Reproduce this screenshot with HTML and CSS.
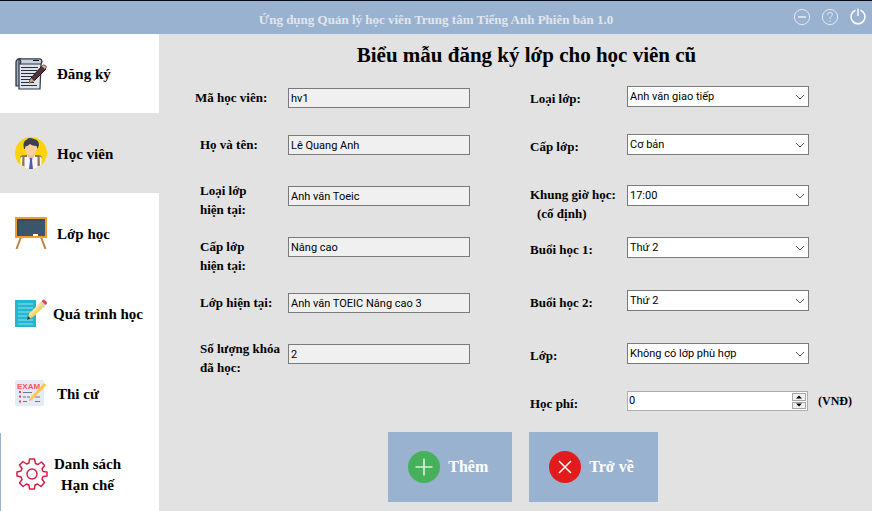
FILE: index.html
```html
<!DOCTYPE html>
<html lang="vi">
<head>
<meta charset="utf-8">
<title>Ứng dụng Quản lý học viên</title>
<link rel="stylesheet" href="styles.css">
</head>
<body>
<header class="topbar">
  <p class="app-name">Ứng dụng Quản lý học viên Trung tâm Tiếng Anh Phiên bản 1.0</p>
  <div class="window-tools">
    <button type="button" aria-label="Thu nhỏ"><svg viewBox="0 0 18 18"><circle cx="9" cy="9" r="7.6" opacity=".7"/><path d="M5 9h8" stroke-width="2" opacity=".6"/></svg></button>
    <button type="button" aria-label="Trợ giúp"><svg viewBox="0 0 18 18"><circle cx="9" cy="9" r="7.6" opacity=".7"/><path d="M6.6 7V6.300Q6.800 4.500 9 4.500Q11.400 4.500 11.400 6.500Q11.400 7.600 10 8.500Q9 9.200 9 11M9 12.500V14" opacity=".7"/></svg></button>
    <button type="button" aria-label="Thoát"><svg viewBox="0 0 18 18"><path d="M6.500 2.200A7 7 0 1 0 11.500 2.200" stroke-width="1.500"/><path d="M9 0.500V8" stroke-width="2" opacity=".7"/></svg></button>
  </div>
</header>
<div class="shell">
  <nav class="sidebar">
    <a class="nav-item" href="#dang-ky">
      <svg class="icon" viewBox="0 0 32 32">
        <path d="M5 1Q1 1 1 4V28H5Z" fill="#9cafc2" stroke="#222832" stroke-width="1.200"/>
        <path d="M4 1H25Q28 2 26 6L25 31H4Z" fill="#dce3ed" stroke="#303640" stroke-width="1.200"/>
        <path d="M4 1H25Q28 2 26 6H5Q7 3 4 1Z" fill="#c4d0dc" stroke="#303640" stroke-width="1.200"/>
        <path d="M18 2.500h6" stroke="#111"/>
        <path d="M6 9.500h17M6 12.500h16M6 15.500h15M6 18.500h11M6 21.500h10M6 24.500h13M6 27.500h16" stroke="#292e38" stroke-width="1.100"/>
        <path d="M14 25L16 20L27 8L31 11L20 22Z" fill="#513238" stroke="#20161a"/>
        <path d="M14 25L16 20L19 23Z" fill="#d7a46d"/><path d="M26.500 8.500L28.500 7Q31 7 31.500 9L30 11.500Z" fill="#e5b486" stroke="#292024" stroke-width=".7"/>
      </svg>
      <span>Đăng ký</span>
    </a>
    <a class="nav-item is-active" href="#hoc-vien">
      <svg class="icon" viewBox="0 0 32 32">
        <circle cx="16" cy="16" r="16" fill="#fdd303"/>
        <path d="M5.500 28V21Q6 19 11 18.500H21Q26 19 26.500 21V28Q16 36 5.500 28Z" fill="#f7f7fb"/>
        <path d="M13 15H19V20L16 22L13 20Z" fill="#efbd89"/>
        <path d="M10 8Q16 3 22 8V12Q21 18 16 19Q11 18 10 12Z" fill="#fccfa0"/>
        <path d="M9 12Q7 4 12 2.500Q14 0 19 2Q24 3 24 8L22.500 12L21.500 9Q17 9 15 7Q13 9 10.500 9.500L9.800 12Z" fill="#394252"/>
        <path d="M7.500 18.500L9.500 18V29.500L7 28.500ZM24.500 18.500L22.500 18V29.500L25 28.500Z" fill="#93705e"/>
        <path d="M5 20Q6 17.500 12 18V20H9.500Q6 19 5 21ZM27 20Q26 17.500 20 18V20H22.500Q26 19 27 21Z" fill="#93705e"/>
        <path d="M14.500 21H17.500L17 23.500L18 32H14L15 23.500Z" fill="#4e5daa"/>
      </svg>
      <span>Học viên</span>
    </a>
    <a class="nav-item" href="#lop-hoc">
      <svg class="icon" viewBox="0 0 32 32">
        <path d="M6 20L1.500 32M26 20L30.500 32" stroke="#bd8140" stroke-width="2"/>
        <path d="M1 1H31V20H1Z" fill="#3b566b" stroke="#f29c29" stroke-width="2"/>
        <path d="M3 19V3H29" fill="none" stroke="#2d4358"/><path d="M18 18h5" stroke="#fff" stroke-width="2"/>
      </svg>
      <span>Lớp học</span>
    </a>
    <a class="nav-item nav-item--long" href="#qua-trinh">
      <svg class="icon" viewBox="0 0 32 32">
        <path d="M0 3H21V30H0Z" fill="#22b8d1"/>
        <path d="M3 7h15M3 11h15M3 15h14M3 19h9M3 23h15M3 27h15" stroke="#8fe0ea"/>
        <path d="M12 23L14 17L26 5L30 9L18 20Z" fill="#f8d568"/><path d="M14 17L26 5L27.500 6.500L16 18Z" fill="#ffe69c"/>
        <path d="M12 23L13 19L15.500 21.500Z" fill="#26333c"/><path d="M25 6L27.500 3.500L31 7L29 9.500Z" fill="#cbd5dc"/><path d="M26.500 4L28.500 2.500Q32 4 32 6.500L30.500 8Z" fill="#dc4557"/>
      </svg>
      <span>Quá trình học</span>
    </a>
    <a class="nav-item" href="#thi-cu">
      <svg class="icon" viewBox="0 0 32 32">
        <rect y="3" width="29" height="26" rx="2" fill="#e5eaf7"/>
        <text class="exam" x="2" y="12">EXAM</text>
        <path d="M4 15h2M4 19.500h2M4 24.500h2" stroke="#ef4059" stroke-width="2"/>
        <path d="M8 15.500h9M8 20h3M12 20h3M20 20h5M8 24.500h4M20 24.500h5" stroke="#6d768a" stroke-width="1.200"/>
        <path d="M14 24L15 21L29 6L31.500 8L17 23Z" fill="#fec94f"/><path d="M14 24L15 21L17 23Z" fill="#ecc188"/>
      </svg>
      <span>Thi cử</span>
    </a>
    <a class="nav-item nav-item--last" href="#danh-sach">
      <svg class="icon" viewBox="0 0 32 32" fill="none" stroke="#d81e47" stroke-width="1.500">
        <circle cx="16" cy="16" r="5"/>
        <path stroke-linejoin="round" d="M13.500 1H18.500L19.500 5.500L22 6.500L25.500 4L28.500 7.500L26 11L27 13.500L31 14V18L27 18.500L26 21L28.500 24.500L25 28.500L21.500 26L19 27L18.500 31H13.500L13 27L10.500 26L7 28.500L3.500 25L6 21.500L5 19L1 18V14L5 13L6 10.500L3.500 7L7 3.500L10.500 6L13 5Z"/>
      </svg>
      <span>Danh sách<br>Hạn chế</span>
    </a>
  </nav>
  <main class="content">
    <h1>Biểu mẫu đăng ký lớp cho học viên cũ</h1>
    <form>
      <div class="form-grid">
        <div class="fields fields--current">
          <div class="field"><label class="flush" for="ma">Mã học viên:</label><input id="ma" type="text" value="hv1" readonly></div>
          <div class="field"><label for="ten">Họ và tên:</label><input id="ten" type="text" value="Lê Quang Anh" readonly></div>
          <div class="field"><label class="raised" for="loai-ht">Loại lớp<br>hiện tại:</label><input id="loai-ht" type="text" value="Anh văn Toeic" readonly></div>
          <div class="field"><label for="cap-ht">Cấp lớp<br>hiện tại:</label><input id="cap-ht" type="text" value="Nâng cao" readonly></div>
          <div class="field"><label for="lop-ht">Lớp hiện tại:</label><input id="lop-ht" type="text" value="Anh văn TOEIC Nâng cao 3" readonly></div>
          <div class="field"><label class="raised" for="so">Số lượng khóa<br>đã học:</label><input id="so" type="text" value="2" readonly></div>
        </div>
        <div class="fields fields--new">
          <div class="field"><label for="loai">Loại lớp:</label><div class="picker"><select id="loai"><option>Anh văn giao tiếp</option></select><svg viewBox="0 0 10 6"><path d="M1 1L5 5L9 1"/></svg></div></div>
          <div class="field"><label for="cap">Cấp lớp:</label><div class="picker"><select id="cap"><option>Cơ bản</option></select><svg viewBox="0 0 10 6"><path d="M1 1L5 5L9 1"/></svg></div></div>
          <div class="field"><label class="two-line" for="gio">Khung giờ học:<span class="note">(cố định)</span></label><div class="picker"><select id="gio"><option>17:00</option></select><svg viewBox="0 0 10 6"><path d="M1 1L5 5L9 1"/></svg></div></div>
          <div class="field"><label for="buoi1">Buổi học 1:</label><div class="picker"><select id="buoi1"><option>Thứ 2</option></select><svg viewBox="0 0 10 6"><path d="M1 1L5 5L9 1"/></svg></div></div>
          <div class="field"><label for="buoi2">Buổi học 2:</label><div class="picker"><select id="buoi2"><option>Thứ 2</option></select><svg viewBox="0 0 10 6"><path d="M1 1L5 5L9 1"/></svg></div></div>
          <div class="field"><label for="lop">Lớp:</label><div class="picker"><select id="lop"><option>Không có lớp phù hợp</option></select><svg viewBox="0 0 10 6"><path d="M1 1L5 5L9 1"/></svg></div></div>
          <div class="field"><label for="phi">Học phí:</label>
            <div class="stepper"><input id="phi" type="number" value="0"><div class="steps"><button type="button" aria-label="Tăng"><svg viewBox="0 0 6 4"><path d="M0 3.500L3 .500L6 3.500Z"/></svg></button><button type="button" aria-label="Giảm"><svg viewBox="0 0 6 4"><path d="M0 .500L3 3.500L6 .500Z"/></svg></button></div></div>
            <span class="unit">(VNĐ)</span>
          </div>
        </div>
      </div>
      <div class="actions">
        <button type="submit"><svg class="icon" viewBox="0 0 32 32"><circle cx="16" cy="16" r="16" fill="#46b05b"/><path d="M7.500 16h17M16 7.500v17" stroke="#d6f0db" stroke-width="1.700"/></svg>Thêm</button>
        <button type="button"><svg class="icon" viewBox="0 0 32 32"><circle cx="16" cy="16" r="16" fill="#e21c1c"/><path d="M10 10L22 22M22 10L10 22" stroke="#fff" stroke-width="1.500"/></svg>Trở về</button>
      </div>
    </form>
  </main>
</div>
</body>
</html>
```
FILE: styles.css
```css
* { box-sizing: border-box; }

body {
  margin: 0;
  min-height: 100vh;
  display: flex;
  flex-direction: column;
  background: #e2e2e2;
  color: #000;
  font-family: "Liberation Serif", serif;
  font-weight: bold;
}

.topbar {
  display: grid;
  grid-template-columns: 1fr auto 1fr;
  align-items: center;
  height: 34px;
  padding: 0 5px;
  border-top: 1px solid #080914;
  background: #99b2d0;
}
.app-name { grid-column: 2; margin: 0; padding-top: 4px; color: #e2e6ec; font-size: 13px; line-height: 16px; }
.window-tools { display: flex; justify-content: flex-end; gap: 10px; padding-bottom: 2px; }
.window-tools button { width: 18px; height: 18px; padding: 0; border: 0; background: none; }
.window-tools svg { display: block; width: 18px; height: 18px; fill: none; stroke: #fff; }

.shell { flex: 1; display: grid; grid-template-columns: 159px 1fr; }

.sidebar { display: grid; grid-template-rows: 79px repeat(4, 80px) 1fr; background: #fff; }
.nav-item {
  display: flex;
  align-items: center;
  gap: 10px;
  padding-left: 15px;
  color: #000;
  font-size: 15px;
  line-height: 21px;
  text-decoration: none;
  white-space: nowrap;
}
.nav-item span { padding-top: 2px; }
.nav-item.is-active { background: #e2e2e2; }
.nav-item--long { gap: 6px; }
.nav-item--last { gap: 6px; padding-top: 3px; border-left: 1px solid #99b2d0; text-align: center; }
.icon { flex: none; width: 32px; height: 32px; }
.exam { fill: #fa5557; font: bold 8px "Liberation Sans", sans-serif; }

h1 { margin: 0; padding-left: 22px; font-size: 21px; line-height: 42px; text-align: center; }

.form-grid {
  display: grid;
  grid-template-columns: 275fr 324fr;
  column-gap: 60px;
  padding: 10px 18px 0 36px;
}
.fields { display: grid; align-content: start; }
.fields--current { padding-top: 2px; grid-template-rows: 47px 51px 51px 56px 51px 20px; }
.fields--new { grid-template-rows: 48px 51px 52px 53px 53px 48px 21px; }
.field { display: grid; align-items: start; height: 20px; }
.fields--current .field { grid-template-columns: 93px 1fr; }
.fields--new .field { grid-template-columns: 97px 1fr 45px; }

label { font-size: 13px; line-height: 19px; white-space: nowrap; }
.fields--current label { padding-left: 5px; }
.fields--current .flush { padding-left: 0; }
.fields--current .raised { margin-top: -5px; }
.fields--new label { padding-top: 3px; }
.fields--new .two-line { padding-top: 0; }
.note { display: block; padding-left: 7px; }
.unit { padding-left: 9px; font-size: 12px; line-height: 20px; }

input, select {
  width: 100%;
  min-width: 0;
  margin: 0;
  border: 1px solid #7a7a7a;
  border-radius: 0;
  color: #000;
  font-family: Roboto, sans-serif;
  font-size: 11px;
}
input { height: 20px; padding: 1px 2px 0; background: #f0f0f0; }
.picker { position: relative; height: 21px; }
select { display: block; height: 21px; padding: 0 20px 1px 2px; background: #fff; appearance: none; }
.picker svg { position: absolute; top: 8px; right: 4px; width: 10px; height: 6px; fill: none; stroke: #555; pointer-events: none; }

.stepper { display: flex; height: 20px; margin-right: 1px; border: 1px solid #abadb3; background: #fff; }
.stepper input { flex: 1; height: 18px; padding: 0 1px 1px; border: 0; background: #fff; appearance: textfield; }
.stepper input::-webkit-inner-spin-button { appearance: none; }
.steps { display: grid; grid-template-rows: 1fr 1fr; gap: 1px; width: 15px; padding: 1px 1px 1px 0; }
.steps button { display: grid; place-items: center; min-height: 0; padding: 0; border: 1px solid #a6a6a6; background: #f0f0f0; }
.steps svg { width: 6px; height: 4px; }

.actions { display: flex; justify-content: center; gap: 17px; padding: 20px 0 9px 15px; }
.actions button {
  display: flex;
  align-items: center;
  gap: 8px;
  height: 70px;
  padding: 0 24px 0 20px;
  border: 0;
  background: #99b2d0;
  color: #fff;
  font: bold 16px/20px "Liberation Serif", serif;
}
```
